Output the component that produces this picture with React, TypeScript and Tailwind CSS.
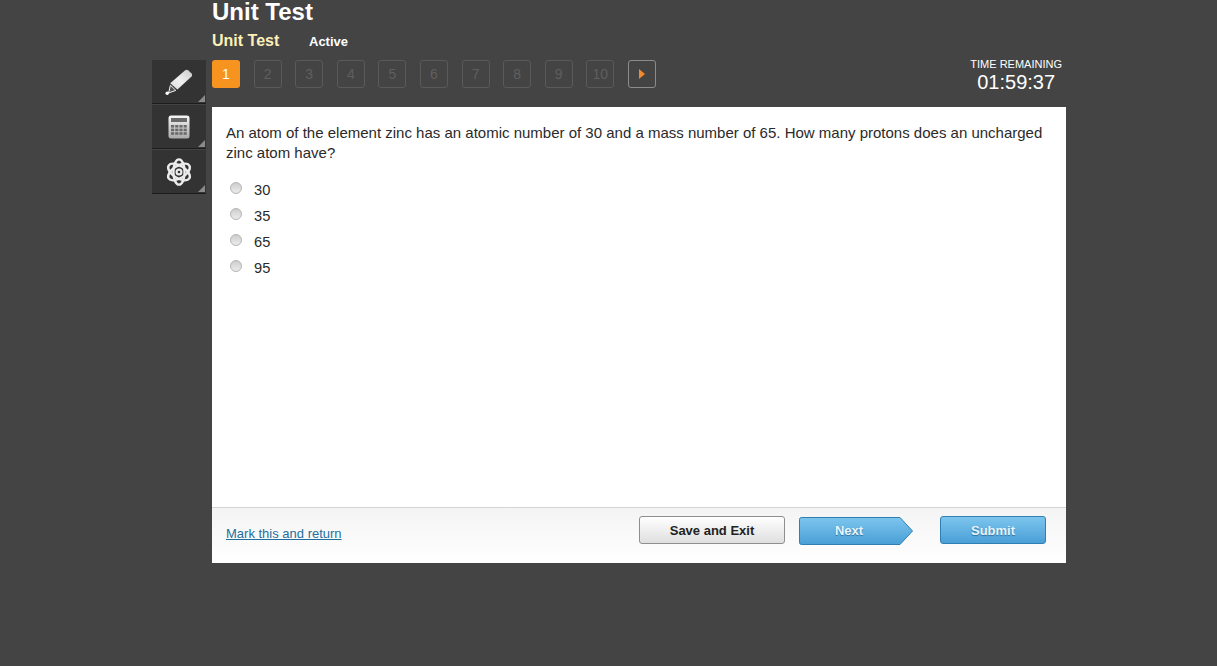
const questions = ['1', '2', '3', '4', '5', '6', '7', '8', '9', '10'];
const answers = ['30', '35', '65', '95'];

function PencilIcon() {
  return (
    <svg width="28" height="26" viewBox="0 0 28 26">
      <defs>
        <linearGradient id="pencilFill" x1="1" y1="0" x2="0" y2="1">
          <stop offset="0" stopColor="#c8c8c8" />
          <stop offset="0.55" stopColor="#f0f0f0" />
          <stop offset="1" stopColor="#dcdcdc" />
        </linearGradient>
      </defs>
      <path d="M5.2 14.2 L20.2 1.2 Q21.8 0.2 23.2 1.2 L26.6 4.6 Q27.8 6 26.6 7.6 L12.4 20.6 Z" fill="url(#pencilFill)" />
      <path d="M5.4 16.2 L10.8 21.4 L3.6 24 Z" fill="#555555" stroke="#f2f2f2" strokeWidth="1" strokeLinejoin="round" />
      <circle cx="2.2" cy="24.2" r="1.7" fill="#ffffff" />
    </svg>
  );
}

function CalculatorIcon() {
  const keys = [0, 1, 2, 3, 4, 5, 6, 7, 8, 9, 10, 11];
  return (
    <svg width="22" height="24" viewBox="0 0 22 24">
      <defs>
        <linearGradient id="calcFill" x1="0" y1="0" x2="0" y2="1">
          <stop offset="0" stopColor="#f6f6f6" />
          <stop offset="1" stopColor="#a9a9a9" />
        </linearGradient>
      </defs>
      <rect x="0.5" y="0.5" width="21" height="23" rx="2.5" fill="url(#calcFill)" />
      <rect x="3" y="3" width="16" height="4" fill="#686868" />
      {keys.map((k) => (
        <rect
          key={k}
          x={3 + (k % 4) * 4.2}
          y={10 + Math.floor(k / 4) * 3.6}
          width="3.2"
          height="2.6"
          fill="#6a6a6a"
        />
      ))}
    </svg>
  );
}

function AtomIcon() {
  return (
    <svg width="28" height="28" viewBox="0 0 28 28" fill="none" stroke="#ececec" strokeWidth="2.4">
      <ellipse cx="14" cy="14" rx="12.2" ry="6.2" transform="rotate(32 14 14)" />
      <ellipse cx="14" cy="14" rx="12.2" ry="6.2" transform="rotate(-32 14 14)" />
      <ellipse cx="14" cy="14" rx="5.6" ry="12.6" />
      <circle cx="14" cy="14" r="2.4" strokeWidth="2.2" />
    </svg>
  );
}

function ToolTile({ children }: { children: React.ReactNode }) {
  return (
    <div className="relative flex h-[44px] w-[54px] items-center justify-center border-b border-[#1c1c1c] bg-[#333333]">
      {children}
      <span className="absolute bottom-[1px] right-[1px] h-0 w-0 border-b-[7px] border-l-[7px] border-b-[#8a8a8a] border-l-transparent" />
    </div>
  );
}

export default function App() {
  return (
    <div className="h-[666px] overflow-hidden bg-[#444444] font-['Liberation_Sans',Arial,sans-serif]">
      <div className="flex pl-[152px]">
        <div className="flex flex-col gap-[1px] pt-[60px]">
          <ToolTile>
            <PencilIcon />
          </ToolTile>
          <ToolTile>
            <CalculatorIcon />
          </ToolTile>
          <ToolTile>
            <AtomIcon />
          </ToolTile>
        </div>

        <div className="ml-[6px] w-[854px]">
          <h1 className="h-[24px] text-[24px] font-bold leading-[24px] text-white">Unit Test</h1>
          <div className="flex h-[36px] items-baseline pt-[7px]">
            <span className="w-[97px] text-[16px] font-bold leading-[20px] text-[#fdf0b8]">Unit Test</span>
            <span className="text-[13px] font-bold leading-[20px] text-white">Active</span>
          </div>

          <div className="flex h-[47px] items-start justify-between pr-[4px]">
            <div className="flex w-[444px] justify-between">
              {questions.map((q, i) => (
                <button
                  key={q}
                  className={
                    i === 0
                      ? 'flex h-[28px] w-[28px] items-center justify-center rounded-[3px] bg-[#f7941f] text-[14px] text-white'
                      : 'flex h-[28px] w-[28px] items-center justify-center rounded-[3px] border border-[#5a5a5a] text-[14px] text-[#5f5f5f]'
                  }
                >
                  {q}
                </button>
              ))}
              <button className="flex h-[28px] w-[28px] items-center justify-center rounded-[3px] border border-[#8c8c8c]">
                <span className="h-0 w-0 border-y-[5px] border-l-[6px] border-y-transparent border-l-[#f08a2c]" />
              </button>
            </div>
            <div className="-mt-[2px] text-center text-white">
              <div className="text-[11px] leading-[13px]">TIME REMAINING</div>
              <div className="text-[20px] leading-[22px]">01:59:37</div>
            </div>
          </div>

          <div className="bg-white">
            <div className="h-[400px] px-[14px] pt-[16px] text-[#2a2a2a]">
              <p className="text-[15px] leading-[20px]">
                An atom of the element zinc has an atomic number of 30 and a mass number of 65. How many protons does an
                uncharged zinc atom have?
              </p>
              <div className="mt-[14px] flex flex-col">
                {answers.map((a) => (
                  <label key={a} className="flex h-[26px] items-center gap-[12px] pl-[4px] text-[14.67px]">
                    <span className="-mt-[5px] h-[12px] w-[12px] rounded-full border border-[#b4b4b4] bg-gradient-to-b from-[#cdcdcd] to-[#ececec]" />
                    {a}
                  </label>
                ))}
              </div>
            </div>

            <div className="flex h-[56px] items-start justify-between border-t border-[#d4d4d4] bg-gradient-to-b from-[#f4f4f4] to-white pl-[14px] pr-[20px] pt-[8px]">
              <a className="mt-[9px] text-[13px] leading-[18px] text-[#1f6f9c] underline">Mark this and return</a>
              <div className="flex items-start">
                <button className="h-[28px] w-[146px] rounded-[3px] border border-[#8e8e8e] bg-gradient-to-b from-white to-[#dfdfdf] pt-[1px] text-[13px] font-bold text-[#222222]">
                  Save and Exit
                </button>
                <div className="relative ml-[14px] mt-[1px] h-[28px] w-[115px]">
                  <svg width="115" height="28" viewBox="0 0 115 28" className="absolute inset-0">
                    <defs>
                      <linearGradient id="nextFill" x1="0" y1="0" x2="0" y2="1">
                        <stop offset="0" stopColor="#7cc5ee" />
                        <stop offset="1" stopColor="#4a9fd6" />
                      </linearGradient>
                    </defs>
                    <path
                      d="M2.5 0.5 H101 L113.5 14 L101 27.5 H2.5 Q0.5 27.5 0.5 25.5 V2.5 Q0.5 0.5 2.5 0.5 Z"
                      fill="url(#nextFill)"
                      stroke="#2f7fb3"
                    />
                  </svg>
                  <span className="absolute inset-y-0 left-0 flex w-[100px] items-center justify-center pb-[1px] text-[13px] font-bold text-[#e8f4fb] [text-shadow:0_1px_1px_#2a6f9e]">
                    Next
                  </span>
                </div>
                <button className="ml-[26px] h-[28px] w-[106px] rounded-[3px] border border-[#2f7fb3] bg-gradient-to-b from-[#7cc5ee] to-[#4a9fd6] pt-[1px] text-[13px] font-bold text-[#e8f4fb] [text-shadow:0_1px_1px_#2a6f9e]">
                  Submit
                </button>
              </div>
            </div>
          </div>
        </div>
      </div>
    </div>
  );
}
